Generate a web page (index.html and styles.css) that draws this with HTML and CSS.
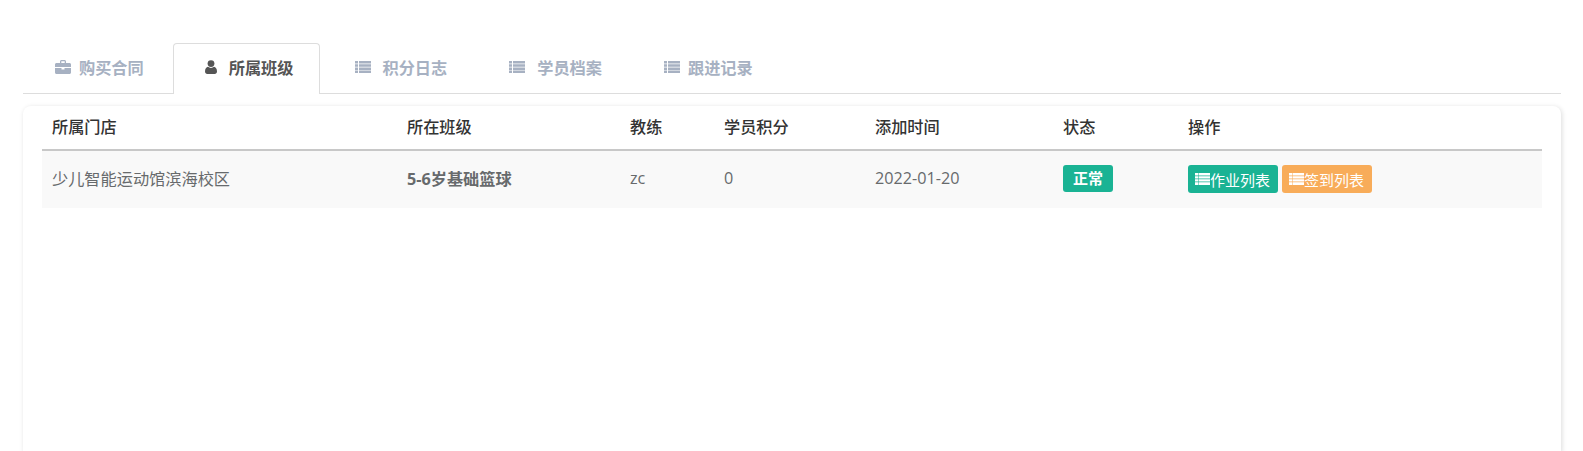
FILE: index.html
```html
<!DOCTYPE html>
<html lang="zh-CN">
<head>
  <meta charset="UTF-8">
  <meta name="viewport" content="width=device-width, initial-scale=1.0">
  <title>学员详情</title>
  <link rel="stylesheet" href="styles.css">
</head>
<body>
  <!-- Tabs -->
  <ul class="tabs">
    <li class="tab">
      <svg class="icon icon-gap" viewBox="0 0 16 14"><path d="M1.500 3H5V1.500C5 .7 5.700 0 6.500 0h3c.8 0 1.500.7 1.500 1.500V3h3.500c.8 0 1.500.7 1.500 1.500V7H0V4.500C0 3.700.7 3 1.500 3zM6.300 1.300V3h3.400V1.300zM0 8h6.500v1.500h3V8H16v4.500c0 .8-.7 1.500-1.500 1.500h-13C.7 14 0 13.300 0 12.500z"/></svg>
      <span>购买合同</span>
    </li>
    <li class="tab active">
      <svg class="icon-user icon-gap-wide" viewBox="0 0 12 14"><circle cx="6" cy="3.600" r="3.400"/><path d="M0 11.500C0 8.800 1.300 7 3 6.800 3.800 7.500 4.900 7.900 6 7.900s2.200-.4 3-1.100c1.700.2 3 2 3 4.700 0 1.500-1 2.500-2.300 2.500H2.300C1 14 0 13 0 11.500z"/></svg>
      <span>所属班级</span>
    </li>
    <li class="tab tab-wide">
      <svg class="icon icon-gap-wide" viewBox="0 0 16 12"><path d="M0 0h3v2.500H0zM4 0h12v2.500H4zM0 3.200h3v2.500H0zM4 3.200h12v2.500H4zM0 6.400h3v2.500H0zM4 6.400h12v2.500H4zM0 9.500h3V12H0zM4 9.500h12V12H4z"/></svg>
      <span>积分日志</span>
    </li>
    <li class="tab tab-wide">
      <svg class="icon icon-gap-wide" viewBox="0 0 16 12"><path d="M0 0h3v2.500H0zM4 0h12v2.500H4zM0 3.200h3v2.500H0zM4 3.200h12v2.500H4zM0 6.400h3v2.500H0zM4 6.400h12v2.500H4zM0 9.500h3V12H0zM4 9.500h12V12H4z"/></svg>
      <span>学员档案</span>
    </li>
    <li class="tab">
      <svg class="icon icon-gap" viewBox="0 0 16 12"><path d="M0 0h3v2.500H0zM4 0h12v2.500H4zM0 3.200h3v2.500H0zM4 3.200h12v2.500H4zM0 6.400h3v2.500H0zM4 6.400h12v2.500H4zM0 9.500h3V12H0zM4 9.500h12V12H4z"/></svg>
      <span>跟进记录</span>
    </li>
  </ul>

  <!-- Class list -->
  <div class="panel">
    <table class="class-table">
      <colgroup>
        <col class="col-store">
        <col class="col-class">
        <col class="col-coach">
        <col class="col-points">
        <col class="col-date">
        <col class="col-status">
        <col>
      </colgroup>
      <thead>
        <tr>
          <th>所属门店</th>
          <th>所在班级</th>
          <th>教练</th>
          <th>学员积分</th>
          <th>添加时间</th>
          <th>状态</th>
          <th>操作</th>
        </tr>
      </thead>
      <tbody>
        <tr>
          <td>少儿智能运动馆滨海校区</td>
          <td class="class-name">5-6岁基础篮球</td>
          <td>zc</td>
          <td>0</td>
          <td>2022-01-20</td>
          <td><span class="badge">正常</span></td>
          <td>
            <div class="actions">
              <a class="btn btn-green">
                <svg class="btn-icon" viewBox="0 0 15 12"><path d="M0 0h3.500v2.400H0zM4 0h11v2.400H4zM0 3.200h3.500v2.200H0zM4 3.200h11v2.200H4zM0 6.200h3.500v2.200H0zM4 6.200h11v2.200H4zM0 9.200h3.500V12H0zM4 9.200h11V12H4z"/></svg>作业列表
              </a>
              <a class="btn btn-orange">
                <svg class="btn-icon" viewBox="0 0 15 12"><path d="M0 0h3.500v2.400H0zM4 0h11v2.400H4zM0 3.200h3.500v2.200H0zM4 3.200h11v2.200H4zM0 6.200h3.500v2.200H0zM4 6.200h11v2.200H4zM0 9.200h3.500V12H0zM4 9.200h11V12H4z"/></svg>签到列表
              </a>
            </div>
          </td>
        </tr>
      </tbody>
    </table>
  </div>
</body>
</html>
```

FILE: styles.css
```css
body {
  margin: 0;
  padding: 43px 22px 0 23px;
  font-family: "Open Sans", "Noto Sans CJK SC", sans-serif;
  font-size: 16.2px;
  color: #676a6c;
  background-color: #fff;
}

.tabs {
  display: flex;
  margin: 0;
  padding: 0;
  list-style: none;
  height: 51px;
  box-sizing: border-box;
  border-bottom: 1px solid #ddd;
}

.tab {
  display: flex;
  align-items: center;
  height: 50px;
  padding: 0 26px 3px 31px;
  margin-right: 2px;
  font-weight: 700;
  color: #a7b1c2;
  fill: #a7b1c2;
  border: 1px solid transparent;
  border-bottom: 0;
  box-sizing: border-box;
  border-radius: 4px 4px 0 0;
}

.tab.active {
  height: 51px;
  padding-right: 25px;
  padding-bottom: 4px;
  margin-right: 3px;
  color: #555;
  fill: #555;
  background-color: #fff;
  border-color: #ddd;
}

.tab-wide {
  padding-right: 27px;
}

.icon {
  width: 16px;
  height: 14px;
}

.icon-user {
  width: 12px;
  height: 14px;
}

.icon-gap {
  margin-right: 8px;
}

.icon-gap-wide {
  margin-right: 12px;
}

.panel {
  height: 346px;
  margin-top: 12px;
  padding: 0 19px;
  background-color: #fff;
  border-radius: 8px 8px 0 0;
  box-shadow: 1px 1px 5px rgba(0, 0, 0, 0.14);
}

.class-table {
  width: 1500px;
  border-collapse: collapse;
  table-layout: fixed;
}

.col-store { width: 355px; }
.col-class { width: 223px; }
.col-coach { width: 94px; }
.col-points { width: 151px; }
.col-date { width: 188px; }
.col-status { width: 125px; }

.class-table th {
  height: 44px;
  padding: 0 10px 3px;
  box-sizing: border-box;
  text-align: left;
  font-weight: 500;
  color: #333;
  border-bottom: 2px solid #c8c8c8;
}

.class-table td {
  height: 58px;
  padding: 0 10px 3px;
  box-sizing: border-box;
  background-color: #f9f9f9;
}

.class-name {
  font-weight: 700;
}

.badge {
  display: block;
  width: 50px;
  height: 27px;
  line-height: 27px;
  text-align: center;
  font-size: 15px;
  font-weight: 700;
  color: #fff;
  background-color: #1ab394;
  border-radius: 3px;
}

.actions {
  display: flex;
  gap: 4px;
  padding-top: 2px;
}

.btn {
  display: flex;
  align-items: center;
  width: 90px;
  height: 28px;
  padding-left: 7px;
  box-sizing: border-box;
  font-size: 15px;
  color: #fff;
  fill: #fff;
  border-radius: 3px;
}

.btn-green {
  background-color: #1ab394;
}

.btn-orange {
  background-color: #f8ac59;
}

.btn-icon {
  width: 15px;
  height: 12px;
}
```
